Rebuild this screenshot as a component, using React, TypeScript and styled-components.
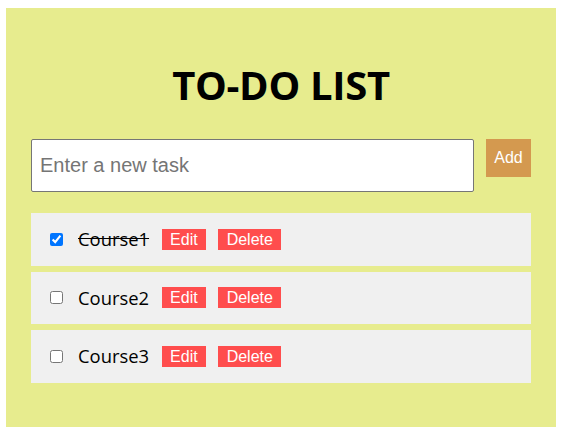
import React, { useState } from "react";
import styled, { createGlobalStyle } from "styled-components";

const GlobalStyle = createGlobalStyle`
  body {
    margin: 8px 7px 0 6px;
    background: #ffffff;
    font-family: "Open Sans", "Noto Sans", sans-serif;
  }
`;

const Container = styled.div`
  width: 550px;
  margin: 0 auto;
  box-sizing: border-box;
  padding: 25px 25px 44px;
  background: #e7ec8e;
`;

const Title = styled.h1`
  margin: 25px 0 27px;
  font-family: "Open Sans", "Noto Sans", sans-serif;
  font-size: 40px;
  line-height: 54px;
  font-weight: 700;
  letter-spacing: -0.3px;
  color: #000;
  text-align: center;
`;

const Form = styled.div`
  display: flex;
  align-items: flex-start;
  gap: 12px;
`;

const TaskInput = styled.input`
  box-sizing: border-box;
  width: 443px;
  height: 53px;
  padding: 0 8px;
  border: 1px solid #767676;
  border-radius: 2px;
  background: #fff;
  font-family: "Liberation Sans", Arial, sans-serif;
  font-size: 20px;
  color: #000;
  outline: none;
  &::placeholder {
    color: #757575;
  }
`;

const AddButton = styled.button`
  box-sizing: border-box;
  width: 45px;
  height: 38px;
  padding: 0;
  border: none;
  background: #d4994f;
  color: #fff;
  font-family: "Liberation Sans", Arial, sans-serif;
  font-size: 16px;
  cursor: pointer;
`;

const List = styled.ul`
  list-style: none;
  margin: 21px 0 0;
  padding: 0;
  display: flex;
  flex-direction: column;
  gap: 6px;
`;

const Row = styled.li`
  display: flex;
  align-items: center;
  padding: 15px;
  background: #f0f0f0;
`;

const Check = styled.input`
  width: 13px;
  height: 13px;
  margin: 0 15px 0 4px;
`;

const TaskText = styled.span<{ $done: boolean }>`
  margin-right: 12.5px;
  font-family: "Open Sans", "Noto Sans", sans-serif;
  font-size: 18.4px;
  line-height: 22.5px;
  color: #000;
  text-decoration: ${(p) => (p.$done ? "line-through" : "none")};
`;

const ActionButton = styled.button`
  box-sizing: border-box;
  height: 21px;
  margin-right: 12px;
  padding: 0 8.5px;
  border: none;
  background: #ff4d4d;
  color: #fff;
  font-family: "Liberation Sans", Arial, sans-serif;
  font-size: 16px;
  line-height: 21px;
  cursor: pointer;
`;

type Task = { id: number; text: string; done: boolean };

export default function App() {
  const [tasks, setTasks] = useState<Task[]>([
    { id: 1, text: "Course1", done: true },
    { id: 2, text: "Course2", done: false },
    { id: 3, text: "Course3", done: false },
  ]);
  const [value, setValue] = useState("");

  const toggle = (id: number) =>
    setTasks((t) => t.map((x) => (x.id === id ? { ...x, done: !x.done } : x)));

  return (
    <>
      <GlobalStyle />
      <Container>
        <Title>TO-DO LIST</Title>
        <Form>
          <TaskInput
            placeholder="Enter a new task"
            value={value}
            onChange={(e) => setValue(e.target.value)}
          />
          <AddButton
            onClick={() => {
              if (!value.trim()) return;
              setTasks((t) => [...t, { id: Date.now(), text: value, done: false }]);
              setValue("");
            }}
          >
            Add
          </AddButton>
        </Form>
        <List>
          {tasks.map((t) => (
            <Row key={t.id}>
              <Check type="checkbox" checked={t.done} onChange={() => toggle(t.id)} />
              <TaskText $done={t.done}>{t.text}</TaskText>
              <ActionButton>Edit</ActionButton>
              <ActionButton
                onClick={() => setTasks((all) => all.filter((x) => x.id !== t.id))}
              >
                Delete
              </ActionButton>
            </Row>
          ))}
        </List>
      </Container>
    </>
  );
}
